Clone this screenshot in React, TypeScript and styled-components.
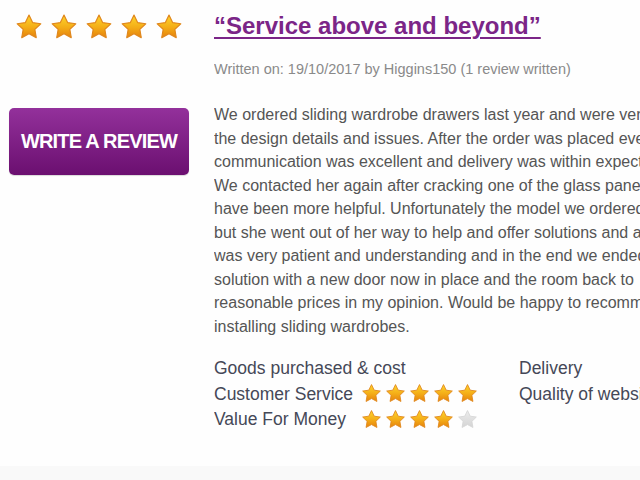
import React from "react";
import styled, { createGlobalStyle } from "styled-components";

const Global = createGlobalStyle`
  html, body { margin: 0; padding: 0; background: #fefefe; }
  body { font-family: "Liberation Sans", Arial, sans-serif; }
`;

const FONT = `"Liberation Sans", Arial, sans-serif`;

const Page = styled.div`
  width: 640px;
  height: 480px;
  overflow: hidden;
  display: flex;
  flex-direction: column;
`;

const Review = styled.div`
  display: flex;
  height: 466px;
  flex-shrink: 0;
  background: #fefefe;
`;

const Footer = styled.div`
  flex: 1;
  background: #f9f9f9;
`;

const Side = styled.div`
  width: 214px;
  flex-shrink: 0;
  padding-left: 9px;
  box-sizing: border-box;
`;

const BigStars = styled.div`
  display: flex;
  gap: 7px;
  margin: 13px 0 0 6px;
`;

const WriteButton = styled.a`
  display: flex;
  align-items: center;
  justify-content: center;
  margin-top: 67px;
  width: 180px;
  height: 67px;
  border-radius: 5px;
  background: linear-gradient(#93319b, #6b0f70);
  color: #fff;
  font: bold 20px ${FONT};
  letter-spacing: -0.8px;
  text-decoration: none;
  box-shadow: 0 1px 1px rgba(0, 0, 0, 0.15);
`;

const Main = styled.div`
  flex: 1;
  min-width: 0;
  padding-top: 12px;
  overflow: hidden;
`;

const Title = styled.a`
  display: block;
  font: bold 24px/28px ${FONT};
  color: #7b2587;
  text-decoration: underline;
  text-decoration-thickness: 2px;
  text-underline-offset: 3px;
  white-space: nowrap;
`;

const Meta = styled.div`
  margin-top: 19px;
  font: 14.5px/20px ${FONT};
  color: #8a8a8a;
  white-space: nowrap;
`;

const Body = styled.p`
  margin: 24px 0 0;
  font: 16px/23.5px ${FONT};
  color: #555;
  white-space: pre;
`;

const Ratings = styled.div`
  margin-top: 18px;
  display: grid;
  grid-template-columns: 305px 1fr;
  white-space: nowrap;
`;

const RatingCol = styled.div`
  display: flex;
  flex-direction: column;
`;

const RatingRow = styled.div`
  display: flex;
  align-items: center;
  height: 25.5px;
  font: 17.5px/25.5px ${FONT};
  color: #454857;
`;

const RatingLabel = styled.span`
  display: inline-block;
  min-width: 147px;
`;

const SmallStars = styled.span`
  display: inline-flex;
  gap: 3px;
  margin-top: -1px;
`;

const Star: React.FC<{ size: number; on?: boolean; id: string }> = ({ size, on = true, id }) => (
  <svg width={size} height={size} viewBox="0 0 24 24">
    <defs>
      <linearGradient id={id} x1="0" y1="0" x2="0" y2="1">
        {on ? (
          <>
            <stop offset="0" stopColor="#fdd62c" />
            <stop offset="0.55" stopColor="#f4ac17" />
            <stop offset="1" stopColor="#e5820c" />
          </>
        ) : (
          <>
            <stop offset="0" stopColor="#ececec" />
            <stop offset="1" stopColor="#d4d4d4" />
          </>
        )}
      </linearGradient>
    </defs>
    <path
      d="M12 1.8l3.1 6.4 7 1-5.1 4.9 1.2 7L12 17.8l-6.2 3.3 1.2-7L1.9 9.2l7-1z"
      fill={`url(#${id})`}
      stroke={on ? "#e0871c" : "#d6d6d6"}
      strokeWidth="1"
      strokeLinejoin="round"
    />
  </svg>
);

const text = `We ordered sliding wardrobe drawers last year and were very
the design details and issues. After the order was placed every
communication was excellent and delivery was within expected
We contacted her again after cracking one of the glass panels
have been more helpful. Unfortunately the model we ordered
but she went out of her way to help and offer solutions and a
was very patient and understanding and in the end we ended
solution with a new door now in place and the room back to
reasonable prices in my opinion. Would be happy to recommend
installing sliding wardrobes.`;

const App: React.FC = () => (
  <Page>
    <Global />
    <Review>
      <Side>
        <BigStars>
          {[0, 1, 2, 3, 4].map((i) => (
            <Star key={i} size={28} id={`big${i}`} />
          ))}
        </BigStars>
        <WriteButton href="#">WRITE A REVIEW</WriteButton>
      </Side>
      <Main>
        <Title href="#">“Service above and beyond”</Title>
        <Meta>Written on: 19/10/2017 by Higgins150 (1 review written)</Meta>
        <Body>{text}</Body>
        <Ratings>
          <RatingCol>
            <RatingRow>Goods purchased &amp; cost</RatingRow>
            <RatingRow>
              <RatingLabel>Customer Service</RatingLabel>
              <SmallStars>
                {[0, 1, 2, 3, 4].map((i) => (
                  <Star key={i} size={21} id={`cs${i}`} />
                ))}
              </SmallStars>
            </RatingRow>
            <RatingRow>
              <RatingLabel>Value For Money</RatingLabel>
              <SmallStars>
                {[0, 1, 2, 3, 4].map((i) => (
                  <Star key={i} size={21} on={i < 4} id={`vm${i}`} />
                ))}
              </SmallStars>
            </RatingRow>
          </RatingCol>
          <RatingCol>
            <RatingRow>Delivery</RatingRow>
            <RatingRow>Quality of website</RatingRow>
          </RatingCol>
        </Ratings>
      </Main>
    </Review>
    <Footer />
  </Page>
);

export default App;
